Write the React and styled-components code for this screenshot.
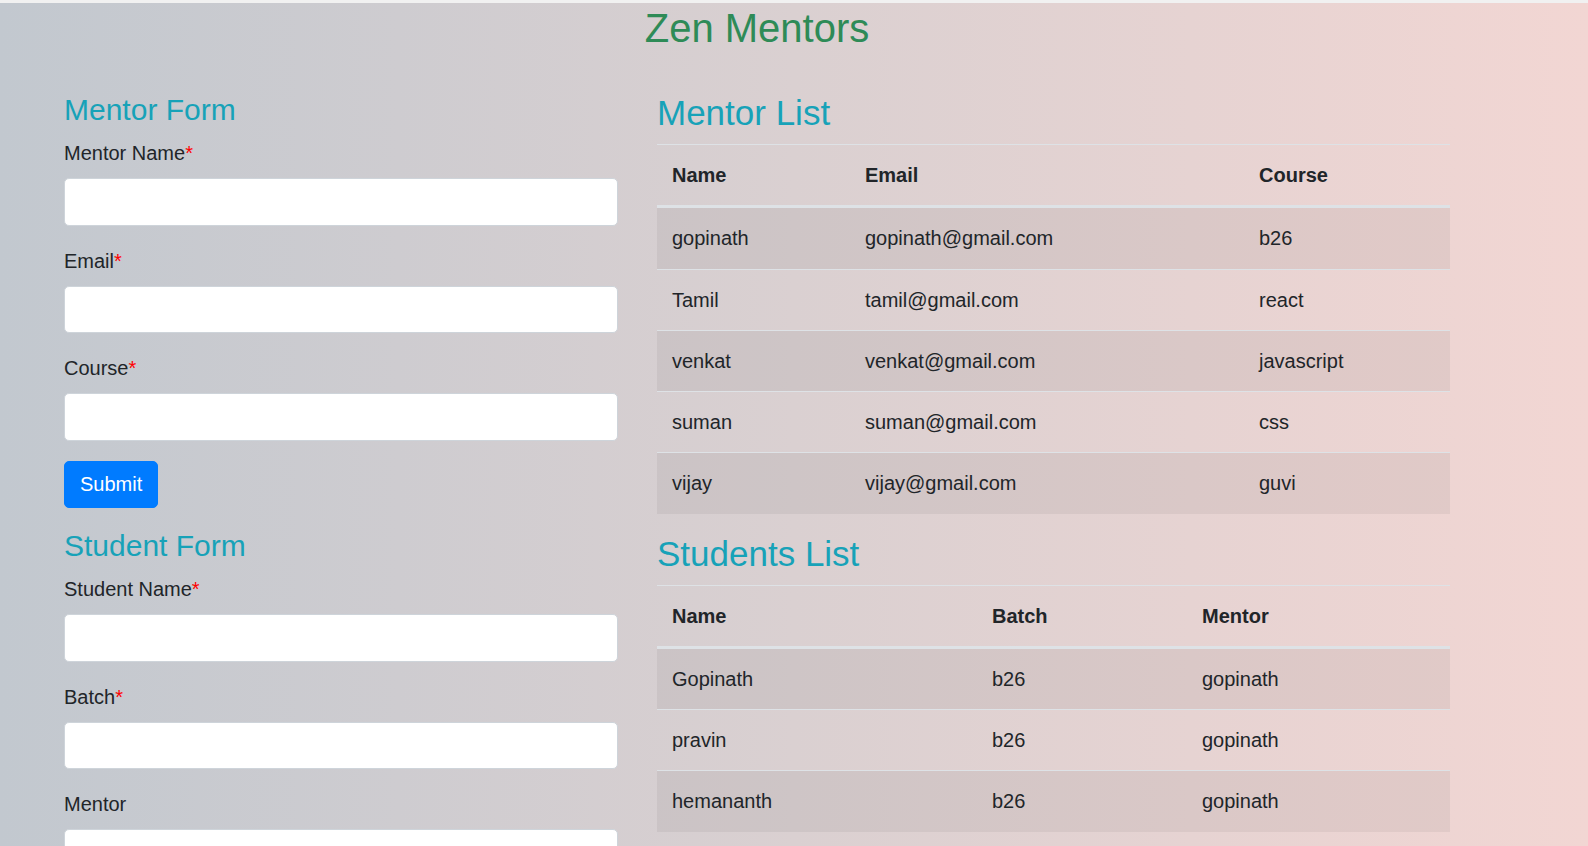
import React from "react";
import styled, { createGlobalStyle } from "styled-components";

const Global = createGlobalStyle`
  html, body {
    margin: 0;
    padding: 0;
  }
  body {
    min-height: 100vh;
    font-family: "Liberation Sans", Arial, sans-serif;
    font-size: 20px;
    line-height: 30px;
    color: #212529;
    background: linear-gradient(to right, #c2c8cf 0%, #dad0d1 50%, #f2d6d3 100%);
    background-attachment: fixed;
  }
  * { box-sizing: border-box; }
`;

const TopStrip = styled.div`
  height: 3px;
  background: #f1f1f1;
`;

const Container = styled.div`
  width: 1386px;
  margin-left: 64px;
`;

const Title = styled.h1`
  margin: 1px 0 40px;
  text-align: center;
  font-size: 40px;
  line-height: 48px;
  font-weight: 400;
  color: #2e8b57;
`;

const Row = styled.div`
  display: grid;
  grid-template-columns: 554px 793px;
  column-gap: 39px;
  align-items: start;
`;

const Column = styled.div`
  display: flex;
  flex-direction: column;
`;

const FormHeading = styled.h4`
  margin: 0 0 10px;
  font-size: 30px;
  line-height: 36px;
  font-weight: 400;
  color: #17a2b8;
`;

const ListHeading = styled.h3`
  margin: 0 0 10px;
  font-size: 35px;
  line-height: 42px;
  font-weight: 400;
  color: #17a2b8;
`;

const Form = styled.div`
  display: flex;
  flex-direction: column;
  margin: 0 0 20px;
`;

const Group = styled.div`
  margin-bottom: 20px;
`;

const Label = styled.label`
  display: block;
  margin-bottom: 10px;
  font-size: 20px;
  line-height: 30px;
  color: #212529;
`;

const Required = styled.span`
  color: #ff0000;
`;

const Input = styled.input`
  display: block;
  width: 100%;
  height: 47.5px;
  padding: 7.5px 15px;
  font-family: inherit;
  font-size: 20px;
  color: #495057;
  background: #ffffff;
  border: 1px solid #ced4da;
  border-radius: 5px;
  outline: none;
`;

const Select = styled.select`
  display: block;
  width: 100%;
  height: 47.5px;
  padding: 7.5px 15px;
  font-family: inherit;
  font-size: 20px;
  color: #495057;
  background: #ffffff;
  border: 1px solid #ced4da;
  border-radius: 5px;
  outline: none;
  appearance: none;
`;

const Button = styled.button`
  align-self: flex-start;
  height: 47.5px;
  padding: 7.5px 15px;
  font-family: inherit;
  font-size: 20px;
  line-height: 30px;
  color: #ffffff;
  background: #007bff;
  border: 1px solid #007bff;
  border-radius: 5px;
  cursor: pointer;
`;

const Table = styled.table`
  width: 100%;
  table-layout: fixed;
  border-collapse: collapse;
  margin-bottom: 19px;
  color: #212529;
`;

const Th = styled.th`
  width: ${(p) => p.$w}px;
  text-align: left;
  font-weight: 700;
  padding: 15px 15px 15.25px;
  line-height: 30px;
  border-top: 1px solid #dee2e6;
  border-bottom: 3px solid #dee2e6;
`;

const Tr = styled.tr`
  background: ${(p) => (p.$striped ? "rgba(0, 0, 0, 0.05)" : "transparent")};
`;

const Td = styled.td`
  padding: 15px 15px 15.25px;
  line-height: 30px;
  border-top: 1px solid #dee2e6;
  white-space: nowrap;
`;

const mentors = [
  ["gopinath", "gopinath@gmail.com", "b26"],
  ["Tamil", "tamil@gmail.com", "react"],
  ["venkat", "venkat@gmail.com", "javascript"],
  ["suman", "suman@gmail.com", "css"],
  ["vijay", "vijay@gmail.com", "guvi"],
];

const students = [
  ["Gopinath", "b26", "gopinath"],
  ["pravin", "b26", "gopinath"],
  ["hemananth", "b26", "gopinath"],
];

function Field({ label, required, children }) {
  return (
    <Group>
      <Label>
        {label}
        {required && <Required>*</Required>}
      </Label>
      {children}
    </Group>
  );
}

function DataTable({ columns, rows }) {
  return (
    <Table>
      <thead>
        <tr>
          {columns.map(([name, w]) => (
            <Th key={name} $w={w}>
              {name}
            </Th>
          ))}
        </tr>
      </thead>
      <tbody>
        {rows.map((r, i) => (
          <Tr key={i} $striped={i % 2 === 0}>
            {r.map((c, j) => (
              <Td key={j}>{c}</Td>
            ))}
          </Tr>
        ))}
      </tbody>
    </Table>
  );
}

export default function App() {
  return (
    <>
      <Global />
      <TopStrip />
      <Container>
        <Title>Zen Mentors</Title>
        <Row>
          <Column>
            <FormHeading>Mentor Form</FormHeading>
            <Form>
              <Field label="Mentor Name" required>
                <Input type="text" />
              </Field>
              <Field label="Email" required>
                <Input type="email" />
              </Field>
              <Field label="Course" required>
                <Input type="text" />
              </Field>
              <Button type="button">Submit</Button>
            </Form>
            <FormHeading>Student Form</FormHeading>
            <Form>
              <Field label="Student Name" required>
                <Input type="text" />
              </Field>
              <Field label="Batch" required>
                <Input type="text" />
              </Field>
              <Field label="Mentor">
                <Select defaultValue="">
                  <option value=""></option>
                  {mentors.map((m) => (
                    <option key={m[0]} value={m[0]}>
                      {m[0]}
                    </option>
                  ))}
                </Select>
              </Field>
              <Button type="button">Submit</Button>
            </Form>
          </Column>
          <Column>
            <ListHeading>Mentor List</ListHeading>
            <DataTable
              columns={[
                ["Name", 193],
                ["Email", 394],
                ["Course", 206],
              ]}
              rows={mentors}
            />
            <ListHeading>Students List</ListHeading>
            <DataTable
              columns={[
                ["Name", 320],
                ["Batch", 210],
                ["Mentor", 263],
              ]}
              rows={students}
            />
          </Column>
        </Row>
      </Container>
    </>
  );
}
